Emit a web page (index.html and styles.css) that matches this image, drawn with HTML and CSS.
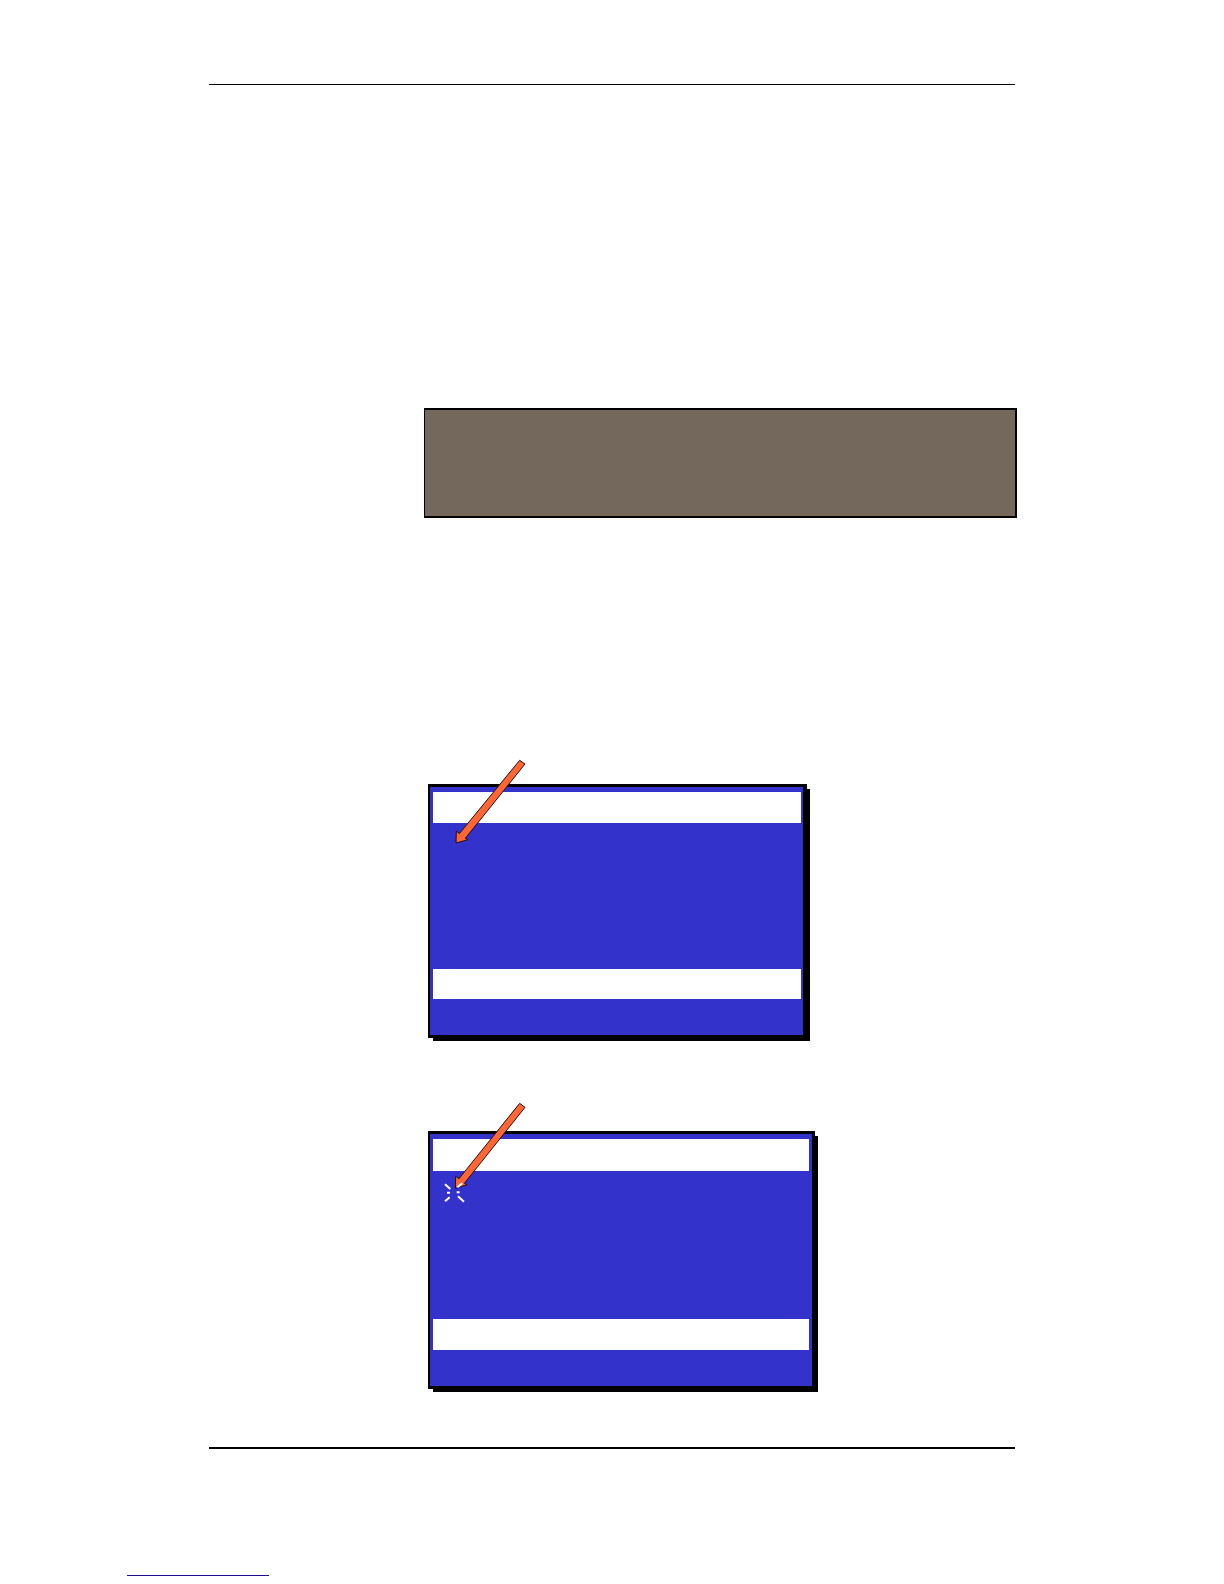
FILE: index.html
```html
<!DOCTYPE html>
<html lang="en">
<head>
<meta charset="utf-8">
<meta name="viewport" content="width=device-width, initial-scale=1">
<title>Display screens</title>
<link rel="stylesheet" href="styles.css">
</head>
<body>
<div class="page">
  <header class="page-header"></header>
  <main class="content">
    <section class="notice"></section>
    <figure class="screen screen-steady">
      <div class="panel">
        <div class="bar bar-top"></div>
        <div class="display"></div>
        <div class="bar bar-bottom"></div>
      </div>
      <svg class="pointer" width="130" height="120" viewBox="0 0 390 360" aria-hidden="true">
        <path class="arrow" d="M299 31 L315 42 L136 265 L144 269 L108 279 L109 243 L118 251 Z"/>
      </svg>
    </figure>
    <figure class="screen screen-flashing">
      <div class="panel">
        <div class="bar bar-top"></div>
        <div class="display"></div>
        <div class="bar bar-bottom"></div>
      </div>
      <svg class="pointer" width="130" height="120" viewBox="0 0 390 360" aria-hidden="true">
        <path class="arrow" d="M299 25 L315 37 L133 265 L141 269 L106 280 L107 244 L117 251 Z"/>
        <path class="flash" d="M75 268 L91 282 M81 293 H90 M75 319 L89 307 M112 277 L127 265 M110 292 H119 M114 304 L132 320"/>
      </svg>
    </figure>
  </main>
  <footer class="page-footer"></footer>
</div>
<div class="bottom-rule"></div>
</body>
</html>
```
FILE: styles.css
```css
* {
  box-sizing: border-box;
}

body {
  margin: 0;
  background: #fff;
  font-family: "Liberation Sans", Arial, sans-serif;
}

.page {
  padding: 84px 209px 0;
}

.page-header {
  border-top: 1px solid #000;
}

.content {
  padding: 323px 0 58px 215px;
}

.notice {
  height: 110px;
  margin-right: -2px;
  border: 2px solid #000;
  border-left-width: 1px;
  background: #73685b;
}

.screen {
  position: relative;
  margin: 0 0 0 4px;
}

.screen-steady {
  max-width: 379px;
  margin-top: 266px;
}

.screen-flashing {
  max-width: 387px;
  margin-top: 93px;
}

.panel {
  padding: 5px 3px 36px;
  border: 3px solid #000;
  border-left-width: 2px;
  background: #3333cc;
  box-shadow: 4px 4px 0 -1px #000;
}

.screen-steady .panel {
  padding-right: 2px;
  border-right-width: 4px;
}

.bar {
  height: 31px;
  background: #fff;
}

.screen-steady .bar-bottom {
  height: 30px;
}

.screen-flashing .bar-top {
  height: 32px;
}

.display {
  height: 146px;
}

.screen-flashing .display {
  height: 148px;
}

.pointer {
  position: absolute;
  top: -34px;
  left: -8px;
}

.screen-flashing .pointer {
  top: -36px;
}

.arrow {
  fill: #ff6633;
  stroke: #201010;
  stroke-width: 3;
}

.flash {
  fill: none;
  stroke: #fff;
  stroke-width: 6;
}

.page-footer {
  border-top: 2px solid #000;
}

.bottom-rule {
  width: 142px;
  margin: 126px 0 8px 127px;
  border-top: 1px solid #1a0d91;
}
```
